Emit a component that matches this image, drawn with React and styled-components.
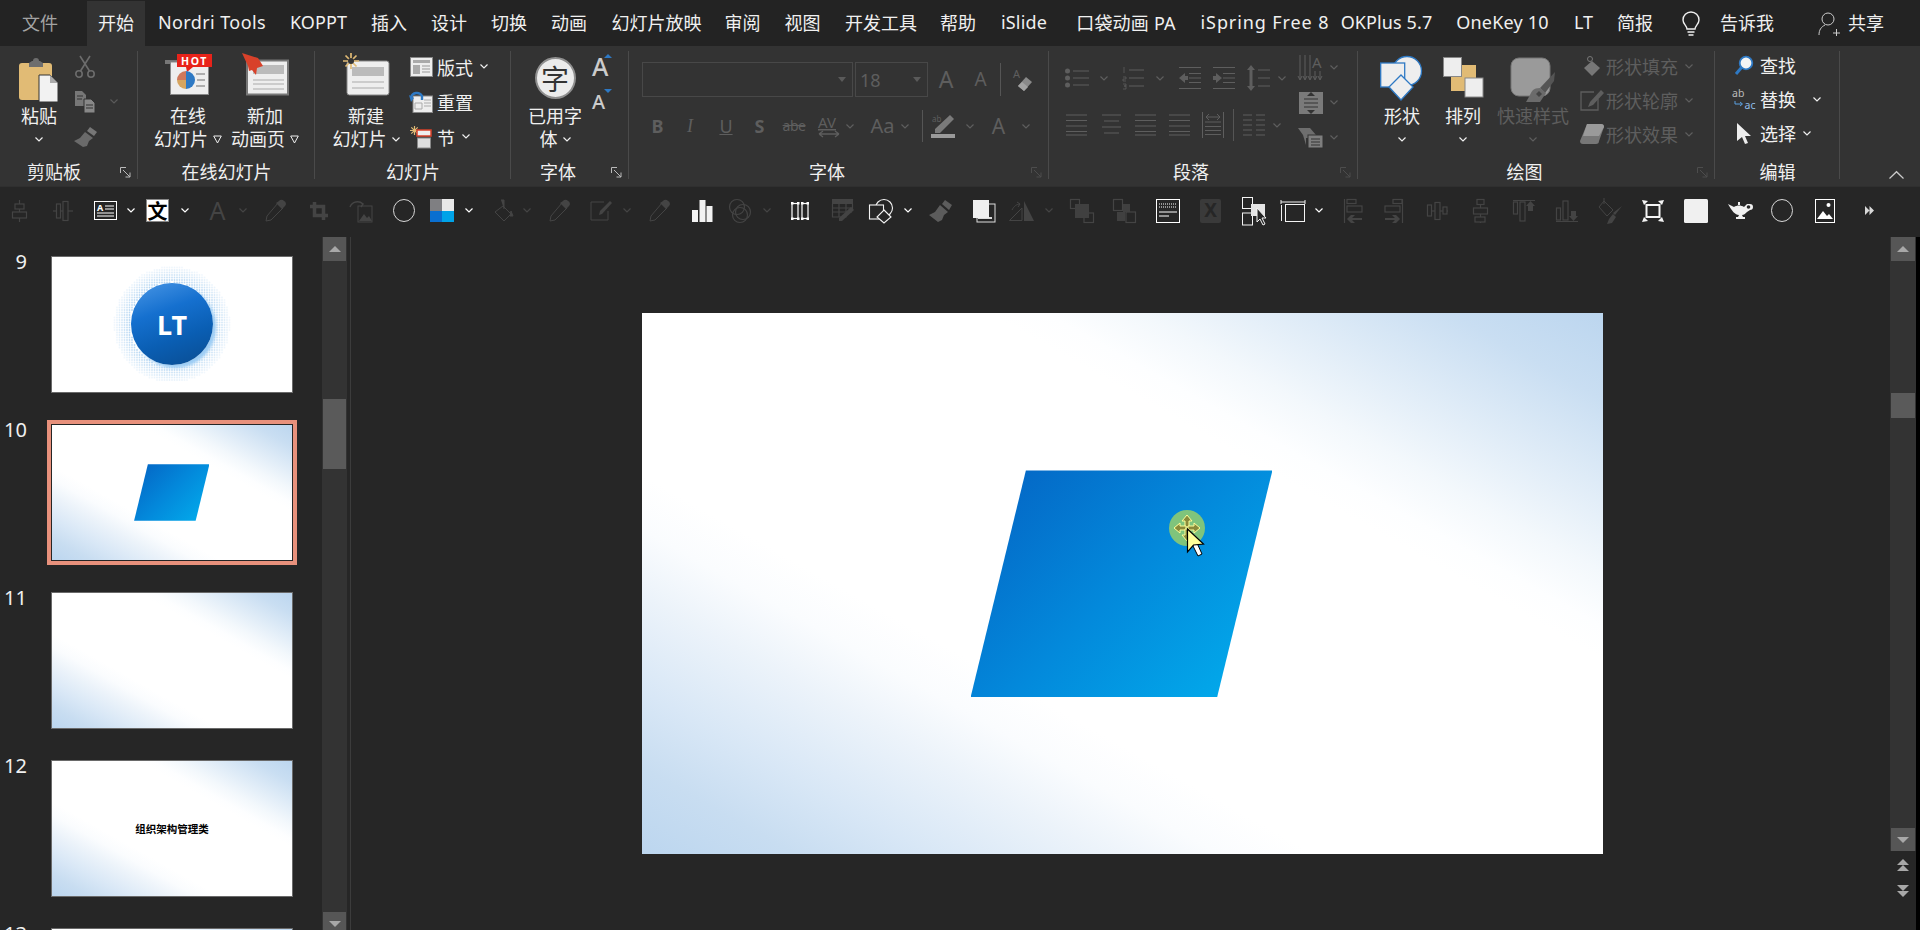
import React from "react";
import styled, { createGlobalStyle } from "styled-components";

const FONT = `"Noto Sans", "Noto Sans CJK SC", sans-serif`;
const W = "#f0f0f0";
const R = "#5e5e5e";
const Q = "#444444";
const GOLD = "#e1bb75";
const BLUE = "#2e79c4";

const Global = createGlobalStyle`
  html, body { margin: 0; height: 100%; overflow: hidden; background: #262626; }
  #root { height: 100%; }
  * { box-sizing: border-box; }
`;

const Page = styled.div`
  height: 100vh; display: flex; flex-direction: column; overflow: hidden;
  font-family: ${FONT}; color: ${W}; background: #262626;
`;

/* ---------- tab bar ---------- */
const TabBar = styled.div`
  height: 46px; flex: none; display: flex; align-items: stretch; padding: 1px 0 0 10px; background: #232323;
`;
const Tab = styled.div`
  width: ${p => p.$w}px; margin-left: ${p => p.$ml || 0}px; flex: none;
  display: flex; align-items: center; justify-content: center; padding-bottom: 3px;
  font-size: 18px; white-space: nowrap; letter-spacing: ${p => p.$ls || 0}px;
  color: ${p => (p.$muted ? "#a3a3a3" : W)};
  background: ${p => (p.$active ? "#333" : "transparent")};
`;

/* ---------- generic flow helpers ---------- */
const Cell = styled.div`
  flex: none; width: ${p => p.$w}px; margin-left: ${p => p.$ml}px;
  display: flex; align-items: center; justify-content: center;
`;
const Flow = ({ start = 0, items }) => {
  let pos = start;
  return items.map(([x, w, node], i) => {
    const ml = x - pos;
    pos = x + w;
    return <Cell key={i} $ml={ml} $w={w}>{node}</Cell>;
  });
};

/* ---------- ribbon ---------- */
const Ribbon = styled.div`
  height: 140px; flex: none; display: flex; align-items: flex-start; padding-top: 5px; background: #333;
`;
const Group = styled.section`
  position: relative; width: ${p => p.$w}px; height: 134px; flex: none; display: flex; flex-direction: column;
  &::after { content: ""; position: absolute; right: 0; top: 0; bottom: 6px; width: 1px; background: #4a4a4a; }
`;
const Body = styled.div`
  height: 109px; flex: none; display: flex; align-items: flex-start; padding-left: ${p => p.$pl || 0}px;
`;
const StackBody = styled.div`
  height: 109px; flex: none; display: flex; flex-direction: column;
`;
const GroupLabel = styled.div`
  height: 24px; line-height: 24px; font-size: 18px; text-align: center; color: ${W};
  padding-right: ${p => p.$pr || 0}px;
`;
const Launcher = styled.svg`
  position: absolute; right: 7px; bottom: 7px;
`;
const Big = styled.div`
  flex: none; width: ${p => p.$w}px; margin-left: ${p => p.$ml || 0}px;
  display: flex; flex-direction: column; align-items: center;
`;
const BigIcon = styled.div`
  height: 54px; padding-top: ${p => p.$t || 0}px; display: flex; align-items: flex-start; justify-content: center;
`;
const BigLine = styled.div`
  height: 23px; line-height: 23px; font-size: 18px; white-space: nowrap; display: flex; align-items: center; gap: 5px;
  color: ${p => (p.$off ? R : W)};
`;
const Col = styled.div`
  flex: none; width: ${p => p.$w}px; margin-left: ${p => p.$ml || 0}px; margin-top: ${p => p.$mt || 0}px;
  display: flex; flex-direction: column;
`;
const SmallRow = styled.div`
  height: ${p => p.$h || 35}px; display: flex; align-items: center;
`;
const SmallText = styled.span`
  font-size: 18px; white-space: nowrap; color: ${p => (p.$off ? R : W)}; margin-left: ${p => p.$ml || 0}px;
`;
const Chevron = styled.svg`
  flex: none; margin-left: ${p => p.$ml || 0}px; overflow: visible;
`;
const Chev = ({ c = W, ml }) => (
  <Chevron $ml={ml} width="8" height="5" viewBox="0 0 8 5">
    <path d="M.5.5 4 4 7.500.5" fill="none" stroke={c} strokeWidth="1.200" />
  </Chevron>
);
const Tri = () => (
  <svg width="9" height="9" viewBox="0 0 9 9"><path d="M.7 1h7.600L4.500 8z" fill="none" stroke={W} /></svg>
);

const Combo = styled.div`
  height: 35px; width: 100%; border: 1px solid #484848; display: flex; align-items: center; justify-content: space-between;
  padding: 0 6px 0 4px; color: ${R}; font-size: 18px;
`;
const ComboArrow = styled.span`
  width: 0; height: 0; border: 4px solid transparent; border-top: 5px solid #5a5a5a; border-bottom: 0;
`;
const VSep = styled.div`
  width: 1px; height: ${p => p.$h || 33}px; background: #555;
`;
const Row = styled.div`
  height: ${p => p.$h}px; flex: none; display: flex; align-items: center; margin-top: ${p => p.$mt || 0}px;
`;
const Glyph = styled.span`
  color: ${p => p.$c || R}; font-size: ${p => p.$s}px; font-weight: ${p => p.$b || 400}; font-style: ${p => p.$i || "normal"};
  line-height: 1; white-space: nowrap; text-decoration: ${p => p.$d || "none"}; font-family: ${p => p.$f || "inherit"};
  letter-spacing: ${p => p.$ls || 0}px;
`;
const CharDisc = styled.div`
  width: 41px; height: 42px; border-radius: 50%; background: #ececec; border: 2px solid #8f8f8f;
  display: flex; align-items: center; justify-content: center; color: #333; font-size: 28px; line-height: 1;
  font-family: "Noto Sans CJK SC", sans-serif;
`;
const SizeA = styled.div`
  position: relative; width: 20px; height: 27px; display: flex; align-items: center; color: #ccc;
  font-size: ${p => p.$s}px; font-weight: 500; line-height: 1;
`;
const SizeTick = styled.span`
  position: absolute; right: 0; top: ${p => p.$top}px; width: 0; height: 0; border: 4px solid transparent;
  ${p => (p.$up ? `border-bottom: 4px solid ${BLUE}; border-top: 0;` : `border-top: 4px solid ${BLUE}; border-bottom: 0;`)}
`;
const FootCaret = styled.div`
  flex: 1; height: 134px; display: flex; align-items: flex-end; justify-content: flex-end; padding: 0 16px 6px 0;
`;

/* ---------- quick toolbar ---------- */
const Toolbar = styled.div`
  height: 51px; flex: none; display: flex; align-items: center; padding-bottom: 3px;
  background: #262626; border-top: 1px solid #2f2f2f;
`;
const WhiteChip = styled.div`
  width: 23px; height: 23px; background: #fff; border: 1px solid #888; display: flex; align-items: center; justify-content: center;
  color: #000; font-size: 20px; font-weight: 700; line-height: 1; font-family: "Noto Sans CJK SC", sans-serif;
`;

/* ---------- workspace ---------- */
const Workspace = styled.div`
  flex: 1; min-height: 0; display: flex; background: #262626;
`;
const ThumbPane = styled.div`
  width: 322px; flex: none; overflow: hidden; padding-top: 19px; display: flex; flex-direction: column; gap: 31px;
`;
const ThumbRow = styled.div`
  height: 137px; flex: none; display: flex; align-items: flex-start; gap: 24px;
`;
const ThumbNo = styled.div`
  width: 27px; text-align: right; font-size: 20px; line-height: 20px; color: ${W}; flex: none; margin-top: -4px;
`;
const slideBg = `
  background-color: #fff;
  background-image:
    linear-gradient(to bottom left, #bcd6ef 0%, #c9def2 8%, #deebf7 16%, #f3f8fc 24%, #fdfeff 29%, rgba(255,255,255,0) 32%),
    linear-gradient(to top right, #bcd6ef 0%, #c8ddf1 8%, #d8e7f6 15%, #ecf3fa 24%, #fafcfe 30%, rgba(255,255,255,0) 35%);
`;
const Thumb = styled.div`
  position: relative; width: 242px; height: 137px; flex: none; overflow: hidden;
  border: 1px solid ${p => (p.$sel ? "#262626" : "#6a6a6a")};
  ${p => (p.$plain ? "background:#fff;" : slideBg)}
`;
const ThumbFrame = styled.div`
  flex: none; box-shadow: ${p => (p.$sel ? "0 0 0 4px #e8917c" : "none")};
`;
const Para = styled.div`
  position: absolute; left: 34.2%; top: 29.1%; width: 31.4%; height: 41.9%;
  clip-path: polygon(18.3% 0, 100% 0, 81.7% 100%, 0 100%);
  background: linear-gradient(135deg, #0468c6 8%, #0389db 50%, #02a6e9 88%);
`;
const LtDisc = styled.div`
  position: absolute; left: 79px; top: 26px; width: 82px; height: 82px; border-radius: 50%;
  background: linear-gradient(160deg, #4a97e6 0%, #1570cf 35%, #0a5eb3 65%, #0a4c90 100%);
  box-shadow: 3px 3px 3px #9ccdf5;
  display: flex; align-items: center; justify-content: center;
  color: #fff; font-weight: 700; font-size: 27px; line-height: 1;
`;
const Halo = styled.svg`
  position: absolute; left: 0; top: 0;
`;
const CenterText = styled.div`
  position: absolute; inset: 0; display: flex; align-items: center; justify-content: center;
  color: #000; font-size: 10.500px; font-weight: 700; white-space: nowrap; font-family: "Noto Sans CJK SC", sans-serif;
`;
const Scroll = styled.div`
  width: ${p => p.$w}px; flex: none; display: flex; flex-direction: column; background: #333; overflow: hidden;
  padding: 0 1px;
`;
const ScrollBtn = styled.div`
  height: ${p => p.$h}px; flex: none; background: #565656; display: flex; align-items: center; justify-content: center;
  margin-bottom: ${p => p.$mb || 0}px;
`;
const ScrollThumb = styled.div`
  height: ${p => p.$h}px; flex: none; margin-top: ${p => p.$mt}px; background: #5a5a5a;
`;
const Spacer = styled.div`flex: 1;`;
const Arrow = styled.span`
  width: 0; height: 0; border-left: 6px solid transparent; border-right: 6px solid transparent; display: block;
  ${p => (p.$up ? "border-bottom: 6px solid #a8a8a8;" : "border-top: 6px solid #a8a8a8;")}
`;
const DividerGap = styled.div`
  width: 4px; flex: none; border-right: 1px solid #3c3c3c;
`;
const SlideArea = styled.div`
  flex: 1; min-width: 0; display: flex; align-items: center; justify-content: center; padding-left: 4px;
`;
const Slide = styled.div`
  position: relative; width: 961px; height: 541px; flex: none; ${slideBg}
`;
const CursorLayer = styled.svg`
  position: absolute; left: 478px; top: 176px;
`;
const RightRail = styled.div`
  width: 26px; flex: none; display: flex; flex-direction: column;
`;
const RightScroll = styled(Scroll)`
  width: 26px; height: 614px;
`;
const PageJump = styled.div`
  flex: none; display: flex; flex-direction: column; align-items: center; gap: 14px; padding-top: 8px;
`;
const Stack = styled.div`
  display: flex; flex-direction: column; align-items: center; gap: 0;
`;
const EdgeStrip = styled.div`
  width: 4px; flex: none; background: #000;
`;

/* ---------- icons: ribbon ---------- */
const IconSvg = styled.svg`
  display: block; overflow: visible;
`;
const I = ({ w, h, children }) => <IconSvg width={w} height={h} viewBox={`0 0 ${w} ${h}`}>{children}</IconSvg>;

const PasteI = () => <I w={40} h={46}>
  <path d="M0 9a3 3 0 0 1 3-3h27a3 3 0 0 1 3 3v34H3a3 3 0 0 1-3-3z" fill={GOLD} />
  <path d="M10 6l3-2h1a3 3 0 0 1 6 0h1l3 2v4H10z" fill="#6e6e6e" />
  <path d="M20 18h11l8 8v19H20z" fill="#f2f2f2" stroke="#333" />
  <path d="M31 18l8 8h-8z" fill="#aaa" />
</I>;
const ScissorsI = () => <I w={20} h={22}>
  <g fill="none" stroke="#6c6c6c" strokeWidth="1.600"><circle cx="4" cy="18" r="3.200" /><circle cx="16" cy="18" r="3.200" /><path d="M5.500 15 15 0M14.500 15 5 0" /></g>
</I>;
const CopyI = () => <I w={21} h={22}>
  <path d="M0 0h7l4 4v11H0z" fill="#777" /><path d="M9 8h7l4 4v10H9z" fill="#888" stroke="#333" />
  <path d="M2 5h6M2 8h5M11 14h7M11 17h7" stroke="#333" />
</I>;
const BrushI = () => <I w={23} h={20}>
  <path d="M16 0l7 5-3 4-7-5z" fill="#777" /><path d="M11 5l8 6-4 3-2 5-4 1-9-6 6-3z" fill="#6a6a6a" />
</I>;
const OnlineI = () => <I w={47} h={42}>
  <rect x="0" y="7" width="14" height="4" fill="#777" />
  <rect x="5.500" y="9" width="38" height="32.500" fill="#eee" stroke="#888" />
  <path d="M12 1h35v13H28l-6 5-1-5h-9z" fill="#e8231a" />
  <text x="29.500" y="12" textAnchor="middle" fill="#fff" fontSize="10.500" fontWeight="700" letterSpacing="1.600" fontFamily={FONT}>HOT</text>
  <path d="M21 18a9 9 0 0 1 0 18z" fill={BLUE} /><path d="M21 27h-9a9 9 0 0 0 9 9z" fill="#d6a55f" /><path d="M21 18a9 9 0 0 0-9 9h9z" fill="#d0785b" />
  <path d="M31 21h9M32 27h8M31 33h9" stroke="#999" strokeWidth="1.500" />
</I>;
const AnimI = () => <I w={47} h={42}>
  <rect x="5" y="7.500" width="41" height="34" fill="#eee" stroke="#777" strokeWidth="2" />
  <rect x="11" y="12" width="31" height="9" fill="#bbb" />
  <path d="M11 27h31M11 31h31M11 36h31" stroke="#aaa" />
  <path d="M0 0l16 5 5 8-6 2-1 7-4-5-3 1-1-5z" fill="#d8412a" />
</I>;
const NewSlideI = () => <I w={46} h={42}>
  <rect x="4" y="8" width="42" height="34" rx="2.500" fill="#eee" stroke="#888" />
  <rect x="9" y="14" width="32" height="9" fill="#bbb" />
  <path d="M9 29h32M9 35h32" stroke="#aaa" />
  <path d="M8 0v16M0 8h16M2.500 2.500l11 11M13.500 2.500l-11 11" stroke={GOLD} strokeWidth="1.700" />
  <circle cx="8" cy="8" r="3" fill="#333" />
</I>;
const LayoutI = () => <I w={23} h={20}>
  <rect x=".5" y=".5" width="22" height="19" fill="#eee" stroke="#888" /><rect x="3" y="3" width="17" height="3" fill="#aaa" />
  <rect x="3" y="8" width="7" height="9" fill="#aaa" /><path d="M12 9h8M12 12h8M12 15h8" stroke="#999" />
</I>;
const ResetI = () => <I w={24} h={22}>
  <rect x="4" y="5" width="19.500" height="16.500" fill="#eee" stroke="#888" /><path d="M15 9h7M15 12h7M15 15h7M6 12h7v6H6z" stroke="#aaa" fill="none" />
  <path d="M2 6.500a6 6 0 0 1 11-1.500v4" fill="none" stroke={BLUE} strokeWidth="2.400" /><path d="M0 4l5 3-3 4z" fill={BLUE} />
</I>;
const SectionI = () => <I w={22} h={22}>
  <path d="M4.500 0v9M0 4.500h9M1.300 1.300l6.400 6.400M7.700 1.300 1.300 7.700" stroke={GOLD} strokeWidth="1.200" />
  <rect x="7" y="4" width="14" height="6" fill="#eee" stroke="#d8412a" strokeWidth="1.500" /><rect x="7.500" y="12" width="13" height="10" fill="#ddd" stroke="#888" />
</I>;
const EraserI = () => <I w={20} h={22}>
  <text x="0" y="9" fontSize="11" fill={R} fontFamily={FONT}>A</text>
  <path d="M13 8l6 5-8 9-6-5z" fill="#8a8a8a" /><path d="M5 17l4-4 6 5-4 4z" fill="#a3a3a3" />
</I>;
const AVI = () => <I w={22} h={23}>
  <text x="0" y="13" fontSize="15" fill={R} fontFamily={FONT} textDecoration="underline">AV</text>
  <path d="M1 19h20M1 19l4-3M1 19l4 3M21 19l-4-3M21 19l-4 3" stroke={R} strokeWidth="1.300" fill="none" />
</I>;
const HiliteI = () => <I w={24} h={23}>
  <text x="1" y="7" fontSize="8" fill={R} fontFamily={FONT}>ab</text>
  <path d="M19 0l4 4-14 14H4v-4z" fill="#7a7a7a" />
  <rect x="0" y="19" width="24" height="4" fill="#9a9a9a" />
</I>;
const BulletsI = () => <I w={24} h={20}>
  <g fill={R}><circle cx="2.500" cy="3" r="2.500" /><circle cx="2.500" cy="10" r="2.500" /><circle cx="2.500" cy="17" r="2.500" /></g>
  <path d="M8 3h16M8 10h16M8 17h16" stroke={R} />
</I>;
const NumsI = () => <I w={22} h={24}>
  <path d="M2 1v6M1 11h3v2H1v2h3M1 18h3v2H2h2v3H1" fill="none" stroke={R} strokeWidth=".8" />
  <path d="M7 4h15M7 12h15M7 20h15" stroke={R} />
</I>;
const IndentI = ({ flip }) => <I w={22} h={22}>
  <path d="M0 .5h22M10 6.500h12M10 11h12M10 15.500h12M0 21.500h22" stroke={R} />
  {flip ? <path d="M0 11l6-5v3h3v4H6v3z" fill={R} transform="translate(9 0) scale(-1 1)" /> : <path d="M0 11l6-5v3h3v4H6v3z" fill={R} />}
</I>;
const SpacingI = () => <I w={23} h={26}>
  <path d="M4 0l4 5H5.500v16H8l-4 5-4-5h2.500V5H0z" fill={R} /><path d="M11 5h12M11 13h12M11 21h12" stroke={R} />
</I>;
const AlignI = ({ m = "j" }) => <I w={21} h={22}>
  <path d={m === "c" ? "M1 1h19M3 7h15M1 13h19M3 19h15" : "M0 1h21M0 6.500h21M0 12h21M0 17.500h21M0 21h21"} stroke={R} />
</I>;
const DistributeI = () => <I w={22} h={26}>
  <path d="M.5 0v26M21.500 0v26M3 10h16M3 14.500h16M3 18.500h16M3 22.500h16" stroke={R} fill="none" />
  <path d="M4 5h14M4 5l3-3M4 5l3 3M18 5l-3-3M18 5l-3 3" stroke={R} fill="none" />
</I>;
const ColsI = () => <I w={22} h={22}>
  <path d="M0 1h9M0 6h9M0 11h9M0 16h9M0 21h9M13 1h9M13 6h9M13 11h9M13 16h9M13 21h9" stroke={R} />
</I>;
const VTextI = () => <I w={25} h={26}>
  <path d="M2 0v24M7 0v24M12 0v24M0 21l2 4 2-4M5 21l2 4 2-4M10 21l2 4 2-4" stroke={R} fill="none" />
  <text x="14" y="13" fontSize="15" fill={R} fontFamily={FONT}>A</text>
  <path d="M17 16v8M22 16v8M15 21l2 4 2-4M20 21l2 4 2-4" stroke={R} fill="none" />
</I>;
const TextAlignI = () => <I w={24} h={22}>
  <rect width="24" height="22" fill="#7a7a7a" /><path d="M5 7h14M5 11h14M5 15h14" stroke="#333" />
  <path d="M12 0l4 4h-8zM12 22l4-4H8z" fill="#333" />
</I>;
const SmartI = () => <I w={25} h={20}>
  <path d="M0 0h12l6 7-2 3H8v7L5 7z" fill="#6e6e6e" /><rect x="10" y="7" width="15" height="13" fill="#7e7e7e" stroke="#333" /><path d="M13 11h9M13 14h9M13 17h9" stroke="#333" />
</I>;
const ShapesI = () => <I w={44} h={44}>
  <circle cx="27" cy="15" r="14.500" fill="#eee" stroke={BLUE} strokeWidth="1.300" />
  <rect x=".7" y="7" width="24" height="24" fill="#eee" stroke={BLUE} strokeWidth="1.300" />
  <path d="M21 19l12 12-12 13L9 31z" fill="#eee" stroke={BLUE} strokeWidth="1.300" />
</I>;
const ArrangeI = () => <I w={41} h={41}>
  <rect x="19" y="8" width="14" height="15" fill={GOLD} /><rect x="8" y="20" width="15" height="14" fill={GOLD} />
  <rect x=".5" y=".5" width="18" height="19" fill="#eee" stroke="#888" /><rect x="22" y="21" width="18" height="19" fill="#eee" stroke="#888" />
</I>;
const QuickI = () => <I w={45} h={44}>
  <rect x="0" y="0" width="39" height="38" rx="8" fill="#9a9a9a" stroke="#777" />
  <path d="M44 14 29 30l5 5 9-12z" fill="#555" /><path d="M29 30c-7 0-8 3-10 7l-4 7h14l6-9z" fill="#6b6b6b" />
  <path d="M25 36l3 3 3-3-3-3z" fill="#444" />
</I>;
const FillI = () => <I w={20} h={20}>
  <path d="M10 5l8 7-8 8-8-8z" fill="#777" /><circle cx="8" cy="3" r="2.500" fill="none" stroke="#777" />
</I>;
const OutlineI = () => <I w={24} h={21}>
  <path d="M14 2H1v18h17V9" fill="none" stroke={R} strokeWidth="1.300" /><path d="M21 0l3 3-11 12-5 2 2-5z" fill={R} />
</I>;
const EffectI = () => <I w={24} h={20}>
  <path d="M7 0h14a3 3 0 0 1 3 3l-5 14a3 3 0 0 1-3 3H3a3 3 0 0 1-3-3z" fill="#777" /><path d="M7 0h14a3 3 0 0 1 3 3l-5 9H3z" fill="#9a9a9a" />
</I>;
const FindI = () => <I w={18} h={19}>
  <circle cx="11" cy="7" r="6.300" fill="#f4f4f4" stroke={BLUE} strokeWidth="1.800" /><path d="M6.500 11.500 1 18" stroke={BLUE} strokeWidth="3" />
</I>;
const ReplaceI = () => <I w={24} h={22}>
  <text x="0" y="9" fontSize="10.500" fill="#bbb" fontFamily={FONT}>ab</text>
  <text x="12.500" y="21" fontSize="10.500" fill="#8fbde8" fontFamily={FONT}>ac</text>
  <path d="M3 13v3h7M8 14l2.500 2L8 18" stroke="#5aa0e0" fill="none" />
</I>;
const SelectI = () => <I w={16} h={21}>
  <path d="M1 0v18l5-4 3 7 3-1-3-7h6z" fill="#eee" />
</I>;
const LauncherI = ({ c }) => (
  <Launcher width="11" height="11" viewBox="0 0 11 11">
    <path d="M.5 6V.5H6M3 3l7 7M10 5.500V10H5.500" fill="none" stroke={c} />
  </Launcher>
);

/* ---------- icons: quick toolbar ---------- */
const qs = { fill: "none", stroke: Q, strokeWidth: 1.200 };
const Q1 = () => <I w={15} h={22}><g {...qs}><path d="M7.500 0v22" /><rect x="3" y="4" width="9" height="5" fill="#262626" /><rect x=".5" y="12" width="14" height="6" fill="#262626" /></g></I>;
const Q2 = () => <I w={20} h={20}><g {...qs}><path d="M0 10h20" /><rect x="3.500" y="3" width="4" height="14" fill="#262626" /><rect x="10" y=".5" width="5" height="19" fill="#262626" /></g></I>;
const Q3 = () => <I w={23} h={19}><rect x=".5" y=".5" width="22" height="18" fill="#262626" stroke="#fff" /><text x="3" y="10" fontSize="9" fontWeight="700" fill="#fff" fontFamily={FONT}>A</text><path d="M11 5h9M11 8h9M3 12h17M3 15h17" stroke="#fff" /></I>;
const Dropper = ({ c = Q }) => <I w={22} h={22}>
  <path d="M14 3l5 5-12 12-5 1 1-5z" fill="none" stroke={c} /><path d="M15 1a3 3 0 0 1 5 0 3 3 0 0 1 1 5l-3 3-6-6z" fill={c} />
</I>;
const Crop = () => <I w={20} h={20}><path d="M5.500 1v13.500H19M14.500 19V5.500H1" fill="none" stroke={Q} strokeWidth="3.500" /></I>;
const ChangePic = () => <I w={24} h={24}>
  <path d="M1 8a8 8 0 0 1 13-3M11 3l3 2-2 3" fill="none" stroke={Q} strokeWidth="1.500" /><rect x="9" y="7" width="14" height="16" fill="none" stroke={Q} /><path d="M10 22l5-7 3 4 2-2 3 5z" fill={Q} />
</I>;
const Oval = () => <I w={22} h={23}><ellipse cx="11" cy="11.500" rx="10.500" ry="11" fill="none" stroke="#d8d8d8" /></I>;
const Swatch = () => <I w={24} h={23}><rect width="12" height="12" fill="#7f7f82" /><rect x="12" width="12" height="12" fill="#e8e8e8" /><rect y="12" width="12" height="11" fill="#0a6fd0" /><rect x="12" y="12" width="12" height="11" fill="#00a3e8" /></I>;
const Bucket = ({ c = Q }) => <I w={20} h={22}><path d="M10 6l8 8-7 7-9-9z" fill="none" stroke={c} /><path d="M8 0h3v9M18 11l2 5h-3z" fill={c} stroke={c} /></I>;
const PenBox = () => <I w={22} h={20}><path d="M14 1H1v18h17v-9" fill="none" stroke={Q} /><path d="M20 0l2 2-10 11-3 1 1-4z" fill={Q} /></I>;
const Bars = () => <I w={20} h={22}><rect y="10" width="6" height="12" fill="#f2f2f2" /><rect x="7.500" y="0" width="6" height="22" fill="#f2f2f2" /><rect x="14.500" y="6" width="6" height="16" fill="#f2f2f2" /></I>;
const Venn = () => <I w={22} h={24}><g {...qs}><circle cx="8" cy="8" r="7.500" /><circle cx="14" cy="13" r="7.500" /><circle cx="11" cy="16" r="7.500" /></g></I>;
const Frames = () => <I w={18} h={18}><g fill="none" stroke="#fff" strokeWidth="1.200"><rect x="1" y="1.500" width="6" height="15" /><rect x="11" y="1.500" width="6" height="15" /></g><g fill="#fff"><rect width="2.500" height="2.500" /><rect x="6" width="2.500" height="2.500" /><rect x="10" width="2.500" height="2.500" /><rect x="15.500" width="2.500" height="2.500" /><rect y="15.500" width="2.500" height="2.500" /><rect x="6" y="15.500" width="2.500" height="2.500" /><rect x="10" y="15.500" width="2.500" height="2.500" /><rect x="15.500" y="15.500" width="2.500" height="2.500" /></g></I>;
const TableEdit = () => <I w={22} h={23}><path d="M0 0h21v5H0z" fill={Q} /><path d="M.5 5v13h14M0 9h20M0 13h20M7 5v13M14 5v8M20.500 5v6" {...qs} /><path d="M19 8l3 3-12 11H7v-3z" fill={Q} /></I>;
const ShapesOut = () => <I w={24} h={24}><g fill="none" stroke="#f4f4f4" strokeWidth="1.100"><circle cx="15" cy="9" r="8.500" /><rect x=".5" y="6" width="14" height="14" fill="#262626" /><path d="M15 11l7 7-7 6-7-6z" fill="#262626" /></g></I>;
const BrushQ = ({ c = "#5c5c5c" }) => <I w={23} h={22}><path d="M16 0l7 5-3 5-7-6z" fill={c} /><path d="M11 5l8 7-4 3-2 5-4 2-9-7 6-3z" fill={c} /></I>;
const DoubleSq = () => <I w={22} h={22}><rect x="4" y="4" width="18" height="18" fill="#262626" stroke="#ddd" /><rect x="5" y="17" width="14" height="2" fill="#ddd" /><rect width="16" height="18" fill="#f0f0f0" /></I>;
const Triangles = () => <I w={25} h={20}><path d="M15 0v20h10z" fill={Q} /><path d="M.5 19.500 13 7v12.500zM3 9c2-4 5-6 8-6M8 1l3 2-2 3" stroke={Q} fill="none" /></I>;
const Over1 = () => <I w={24} h={24}><rect x=".5" y=".5" width="9" height="9" {...qs} /><rect x="14" y="14" width="9.500" height="9.500" {...qs} /><rect x="5" y="5" width="14" height="14" fill="#404040" /></I>;
const Over2 = () => <I w={23} h={24}><rect x=".5" y=".5" width="9" height="11" {...qs} /><rect x="13" y="13" width="9.500" height="10.500" {...qs} /><rect x="10" y="5" width="7" height="8" fill="#404040" /><rect x="4" y="13" width="8" height="9" fill="#404040" /></I>;
const TextFrame = () => <I w={24} h={24}><rect x=".5" y=".5" width="23" height="23" fill="#262626" stroke="#fff" /><path d="M3 5h18M3 8h18" stroke="#fff" strokeDasharray="1 1" /><path d="M3 13h18M3 17h10" stroke="#fff" /></I>;
const XBox = styled.div`
  width: 21px; height: 24px; background: #3a3a3a; border-radius: 2px; display: flex; align-items: center; justify-content: center;
  color: #262626; font-weight: 700; font-size: 19px; line-height: 1;
`;
const CurSq = () => <I w={24} h={28}><g fill="none" stroke="#f4f4f4"><rect x=".5" y=".5" width="10" height="11" /><rect x=".5" y="16" width="10" height="12" /></g><rect x="9" y="7" width="14" height="12" fill="#e5e5e5" /><path d="M15 11v14l3-3 3 6 2-1-3-6h4z" fill="#262626" stroke="#f4f4f4" /></I>;
const FrameQ = () => <I w={24} h={22}><path d="M0 2h24M0 0v4M24 0v4" stroke="#eee" /><rect x="4.500" y="4.500" width="19" height="17" fill="none" stroke="#f4f4f4" /><path d="M.5 5v16" stroke="#eee" /></I>;
const AL = ({ flip }) => <I w={18} h={24}><g {...qs}>{flip ? <path d="M17.500 0v24" /> : <path d="M.5 0v24" />}<rect x={flip ? 8 : 3} y=".5" width="9" height="4" /><rect x={flip ? 0 : 3} y="7" width="15" height="6" /></g><path d={flip ? "M0 19h10l-3-3h4l4 4-4 4H7l3-3H0z" : "M18 19H8l3-3H7l-4 4 4 4h4l-3-3h10z"} fill={Q} /></I>;
const Q31 = () => <I w={21} h={18}><g {...qs}><path d="M0 9h21" /><rect x=".5" y="3" width="4" height="11" fill="#262626" /><rect x="8" y=".5" width="5" height="17" fill="#262626" /><rect x="16" y="5" width="4" height="7" fill="#262626" /></g></I>;
const Q32 = () => <I w={15} h={24}><g {...qs}><path d="M7.500 0v24" /><rect x="4" y=".5" width="7" height="5" fill="#262626" /><rect x=".5" y="9" width="14" height="6" fill="#262626" /><rect x="2" y="18" width="10" height="5" fill="#262626" /></g></I>;
const UpAlign = ({ down }) => <I w={22} h={22}><path d={down ? "M0 21.500h22" : "M0 .5h22"} stroke={Q} /><rect x=".5" y={down ? 8 : 2} width="4" height={12} {...qs} /><rect x="7" y={down ? 1 : 2} width="5" height="19" {...qs} /><path d={down ? "M15 11h5v5h2l-4.500 5L13 16h2z" : "M15 11h5V6h2L17.500 1 13 6h2z"} fill={Q} /></I>;
const BucketBrush = () => <I w={24} h={26}><path d="M6 3l9 9-6 6-8-9z" fill="none" stroke={Q} /><path d="M6 0v6" stroke={Q} /><path d="M24 8l-7 9-2-2zM15 16l3 3-4 6-5 1 2-5z" fill={Q} /></I>;
const FitFrame = () => <I w={22} h={24}><rect x="4.500" y="6" width="13" height="12" fill="none" stroke="#f4f4f4" strokeWidth="2" /><path d="M0 1l6 1-4 4zM22 1l-6 1 4 4zM0 23l6-1-4-4zM22 23l-6-1 4-4z" fill="#f4f4f4" /></I>;
const WhiteRect = () => <I w={24} h={24}><rect width="24" height="24" rx="1.500" fill="#f0f0f0" /></I>;
const Lamp = () => <I w={23} h={17}><path d="M0 2l6 3c3-2 7-2 10 0l3-3h3a3 3 0 0 1 0 6l-3 2c-2 2-3 3-5 3l1 2h2v2H8v-2h2l1-2c-4 0-7-4-11-11z" fill="#f0f0f0" /><circle cx="20.500" cy="5" r="1.800" fill="#262626" /><path d="M11 0v3" stroke="#f0f0f0" strokeWidth="2" /></I>;
const PicQ = () => <I w={20} h={24}><rect x=".5" y=".5" width="19" height="23" fill="#262626" stroke="#fff" /><path d="M2 20l6-8 4 5 2-2 4 5z" fill="#fff" /><circle cx="13.500" cy="6" r="2" fill="#fff" /></I>;
const More = () => <I w={9} h={9}><path d="M0 0l4.500 4.500L0 9zM4.500 0 9 4.500 4.500 9z" fill="#d8d8d8" /></I>;
const ChevQ = ({ on }) => <Chev c={on ? "#fff" : Q} />;
const GlyphA = () => <Glyph $s={25} $c={Q}>A</Glyph>;

const qat = [
  [12, 15, <Q1 />], [53, 20, <Q2 />], [94, 23, <Q3 />], [127, 8, <ChevQ on />], [146, 23, <WhiteChip>文</WhiteChip>], [181, 8, <ChevQ on />],
  [209, 17, <GlyphA />], [239, 8, <ChevQ />], [264, 22, <Dropper />], [309, 20, <Crop />], [349, 24, <ChangePic />],
  [393, 22, <Oval />], [430, 24, <Swatch />], [465, 8, <ChevQ on />], [493, 20, <Bucket />], [523, 8, <ChevQ />],
  [548, 22, <Dropper />], [590, 22, <PenBox />], [623, 8, <ChevQ />], [648, 22, <Dropper />], [692, 20, <Bars />],
  [729, 22, <Venn />], [763, 8, <ChevQ />], [791, 18, <Frames />], [832, 22, <TableEdit />], [869, 24, <ShapesOut />],
  [904, 8, <ChevQ on />], [929, 23, <BrushQ />], [973, 22, <DoubleSq />], [1009, 25, <Triangles />], [1045, 8, <ChevQ />],
  [1070, 24, <Over1 />], [1113, 23, <Over2 />], [1156, 24, <TextFrame />], [1200, 21, <XBox>X</XBox>], [1242, 24, <CurSq />],
  [1281, 24, <FrameQ />], [1315, 8, <ChevQ on />], [1344, 18, <AL />], [1385, 18, <AL flip />], [1427, 21, <Q31 />],
  [1473, 15, <Q32 />], [1513, 22, <UpAlign />], [1556, 22, <UpAlign down />], [1598, 24, <BucketBrush />], [1642, 22, <FitFrame />],
  [1684, 24, <WhiteRect />], [1728, 23, <Lamp />], [1771, 22, <Oval />], [1815, 20, <PicQ />], [1865, 9, <More />],
];

const fontRow1 = [
  [642, 211, <Combo><span /><ComboArrow /></Combo>], [855, 73, <Combo><span>18</span><ComboArrow /></Combo>],
  [936, 20, <Glyph $s={23}>A</Glyph>], [971, 19, <Glyph $s={19}>A</Glyph>], [1000, 1, <VSep />], [1013, 20, <EraserI />],
];
const ChevR = () => <Chev c={R} />;
const fontRow2 = [
  [651, 13, <Glyph $s={18} $b={700}>B</Glyph>], [685, 10, <Glyph $s={18} $i="italic" $f={`"Liberation Serif", serif`}>I</Glyph>],
  [720, 12, <Glyph $s={18} $d="underline">U</Glyph>], [753, 13, <Glyph $s={18} $b={700}>S</Glyph>],
  [782, 24, <Glyph $s={14} $d="line-through" $ls={-.5}>abe</Glyph>], [818, 22, <AVI />], [846, 8, <ChevR />],
  [870, 25, <Glyph $s={20}>Aa</Glyph>], [901, 8, <ChevR />], [922, 1, <VSep $h={32} />], [931, 24, <HiliteI />],
  [966, 8, <ChevR />], [991, 15, <Glyph $s={21}>A</Glyph>], [1022, 8, <ChevR />],
];
const paraRow1 = [
  [1065, 24, <BulletsI />], [1100, 8, <ChevR />], [1122, 22, <NumsI />], [1156, 8, <ChevR />], [1179, 22, <IndentI />],
  [1213, 22, <IndentI flip />], [1247, 23, <SpacingI />], [1278, 8, <ChevR />],
];
const paraRow2 = [
  [1066, 21, <AlignI />], [1101, 21, <AlignI m="c" />], [1135, 20, <AlignI />], [1169, 20, <AlignI />], [1202, 22, <DistributeI />],
  [1233, 1, <VSep $h={32} />], [1243, 22, <ColsI />], [1273, 8, <ChevR />],
];

const tabs = [
  ["开始", 58, .0, true], ["Nordri Tools", 134, .4], ["KOPPT", 79, .1], ["插入", 62], ["设计", 58], ["切换", 62], ["动画", 58], ["幻灯片放映", 117],
  ["审阅", 55], ["视图", 65], ["开发工具", 92], ["帮助", 62], ["iSlide", 70, .2], ["口袋动画 PA", 134, .2], ["iSpring Free 8", 144, .9],
  ["OKPlus 5.7", 99, .1], ["OneKey 10", 133, .2], ["LT", 29], ["简报", 74],
];

const dots = [];
for (let gx = 60; gx <= 180; gx += 2.500) {
  for (let gy = 8; gy <= 128; gy += 2.500) {
    const r = Math.hypot(gx - 120, gy - 67.500);
    if (r > 42 && r < 58) dots.push([gx, gy, ((58 - r) / 16) * .55 + .12]);
  }
}

export default function App() {
  return (
    <Page>
      <Global />
      <TabBar>
        <Tab $w={60} $muted>文件</Tab>
        {tabs.map(([t, w, ls, a], i) => <Tab key={t} $w={w} $ls={ls} $active={a} $ml={i === 0 ? 17 : 0}>{t}</Tab>)}
        <Flow start={1672} items={[
          [1682, 18, <I w={18} h={24}><path d="M5 17c0-3-4-5-4-9a8 8 0 0 1 16 0c0 4-4 6-4 9z" fill="none" stroke={W} strokeWidth="1.400" /><path d="M5.500 20h7M6.500 23h5" stroke={W} strokeWidth="1.600" /></I>],
          [1720, 54, <Tab $w={54}>告诉我</Tab>],
          [1818, 22, <I w={22} h={24}><circle cx="10" cy="7" r="6" fill="none" stroke="#ccc" /><path d="M1 23c0-5 2-8 6-10M15 21h7M18.500 17v7" fill="none" stroke="#ccc" /></I>],
          [1848, 36, <Tab $w={36}>共享</Tab>],
        ]} />
      </TabBar>

      <Ribbon>
        <Group $w={138}>
          <Body $pl={13}>
            <Big $w={52}>
              <BigIcon $t={6}><PasteI /></BigIcon>
              <BigLine>粘贴</BigLine>
              <BigLine><Chev /></BigLine>
            </Big>
            <Col $ml={9} $w={50} $mt={-2}>
              <SmallRow><Cell $ml={1} $w={20}><ScissorsI /></Cell></SmallRow>
              <SmallRow><Cell $ml={1} $w={21}><CopyI /></Cell><Chev c="#5a5a5a" ml={14} /></SmallRow>
              <SmallRow><Cell $ml={0} $w={23}><BrushI /></Cell></SmallRow>
            </Col>
          </Body>
          <GroupLabel $pr={30}>剪贴板</GroupLabel>
          <LauncherI c="#bbb" />
        </Group>

        <Group $w={177}>
          <Body>
            <Big $w={74} $ml={13}>
              <BigIcon $t={2}><OnlineI /></BigIcon>
              <BigLine>在线</BigLine>
              <BigLine>幻灯片<Tri /></BigLine>
            </Big>
            <Big $w={74} $ml={3}>
              <BigIcon $t={2}><AnimI /></BigIcon>
              <BigLine>新加</BigLine>
              <BigLine>动画页<Tri /></BigLine>
            </Big>
          </Body>
          <GroupLabel>在线幻灯片</GroupLabel>
        </Group>

        <Group $w={196}>
          <Body>
            <Big $w={74} $ml={14}>
              <BigIcon $t={2}><NewSlideI /></BigIcon>
              <BigLine>新建</BigLine>
              <BigLine>幻灯片<Chev /></BigLine>
            </Big>
            <Col $ml={6} $w={90} $mt={-2}>
              <SmallRow><Cell $ml={0} $w={24}><LayoutI /></Cell><SmallText $ml={4}>版式</SmallText><Chev ml={7} /></SmallRow>
              <SmallRow><Cell $ml={0} $w={24}><ResetI /></Cell><SmallText $ml={4}>重置</SmallText></SmallRow>
              <SmallRow><Cell $ml={0} $w={24}><SectionI /></Cell><SmallText $ml={4}>节</SmallText><Chev ml={7} /></SmallRow>
            </Col>
          </Body>
          <GroupLabel>幻灯片</GroupLabel>
        </Group>

        <Group $w={118}>
          <Body>
            <Big $w={60} $ml={14}>
              <BigIcon $t={6}><CharDisc>字</CharDisc></BigIcon>
              <BigLine>已用字</BigLine>
              <BigLine>体<Chev /></BigLine>
            </Big>
            <Col $ml={7} $w={24}>
              <SmallRow $h={30}><SizeA $s={25}>A<SizeTick $up $top={1} /></SizeA></SmallRow>
              <SmallRow $h={42}><SizeA $s={20}>A<SizeTick $top={0} /></SizeA></SmallRow>
            </Col>
          </Body>
          <GroupLabel $pr={24}>字体</GroupLabel>
          <LauncherI c="#bbb" />
        </Group>

        <Group $w={420}>
          <StackBody>
            <Row $h={35} $mt={11}><Flow start={629} items={fontRow1} /></Row>
            <Row $h={36} $mt={11}><Flow start={629} items={fontRow2} /></Row>
          </StackBody>
          <GroupLabel $pr={24}>字体</GroupLabel>
          <LauncherI c="#4d4d4d" />
        </Group>

        <Group $w={309}>
          <Body>
            <Col $w={238}>
              <Row $h={34} $mt={10}><Flow start={1049} items={paraRow1} /></Row>
              <Row $h={34} $mt={13}><Flow start={1049} items={paraRow2} /></Row>
            </Col>
            <Col $w={50} $ml={11} $mt={-1}>
              <SmallRow><Cell $ml={0} $w={25}><VTextI /></Cell><Chev c={R} ml={7} /></SmallRow>
              <SmallRow><Cell $ml={0} $w={25}><TextAlignI /></Cell><Chev c={R} ml={7} /></SmallRow>
              <SmallRow><Cell $ml={0} $w={25}><SmartI /></Cell><Chev c={R} ml={7} /></SmallRow>
            </Col>
          </Body>
          <GroupLabel $pr={25}>段落</GroupLabel>
          <LauncherI c="#4d4d4d" />
        </Group>

        <Group $w={357}>
          <Body>
            <Big $w={52} $ml={18}>
              <BigIcon $t={5}><ShapesI /></BigIcon>
              <BigLine>形状</BigLine>
              <BigLine><Chev /></BigLine>
            </Big>
            <Big $w={52} $ml={9}>
              <BigIcon $t={6}><ArrangeI /></BigIcon>
              <BigLine>排列</BigLine>
              <BigLine><Chev /></BigLine>
            </Big>
            <Big $w={74} $ml={7}>
              <BigIcon $t={7}><QuickI /></BigIcon>
              <BigLine $off>快速样式</BigLine>
              <BigLine><Chev c={R} /></BigLine>
            </Big>
            <Col $ml={10} $w={124} $mt={-2}>
              <SmallRow $h={34}><Cell $ml={0} $w={24}><FillI /></Cell><SmallText $off $ml={2}>形状填充</SmallText><Chev c={R} ml={7} /></SmallRow>
              <SmallRow $h={34}><Cell $ml={0} $w={24}><OutlineI /></Cell><SmallText $off $ml={2}>形状轮廓</SmallText><Chev c={R} ml={7} /></SmallRow>
              <SmallRow $h={34}><Cell $ml={0} $w={24}><EffectI /></Cell><SmallText $off $ml={2}>形状效果</SmallText><Chev c={R} ml={7} /></SmallRow>
            </Col>
          </Body>
          <GroupLabel $pr={24}>绘图</GroupLabel>
          <LauncherI c="#4d4d4d" />
        </Group>

        <Group $w={125}>
          <Body>
            <Col $ml={16} $w={100} $mt={-3}>
              <SmallRow $h={34}><Cell $ml={0} $w={25}><FindI /></Cell><SmallText $ml={4}>查找</SmallText></SmallRow>
              <SmallRow $h={34}><Cell $ml={0} $w={25}><ReplaceI /></Cell><SmallText $ml={4}>替换</SmallText><Chev ml={17} /></SmallRow>
              <SmallRow $h={34}><Cell $ml={0} $w={25}><SelectI /></Cell><SmallText $ml={4}>选择</SmallText><Chev ml={7} /></SmallRow>
            </Col>
          </Body>
          <GroupLabel>编辑</GroupLabel>
        </Group>

        <FootCaret>
          <I w={15} h={8}><path d="M.5 7.500 7.500.7l7 6.800" fill="none" stroke="#ccc" strokeWidth="1.200" /></I>
        </FootCaret>
      </Ribbon>

      <Toolbar><Flow items={qat} /></Toolbar>

      <Workspace>
        <ThumbPane>
          <ThumbRow>
            <ThumbNo>9</ThumbNo>
            <Thumb $plain>
              <Halo width="240" height="135" viewBox="0 0 240 135">
                {dots.map(([x, y, o], i) => <circle key={i} cx={x} cy={y} r=".9" fill="#8fc1ec" opacity={o} />)}
              </Halo>
              <LtDisc>LT</LtDisc>
            </Thumb>
          </ThumbRow>
          <ThumbRow>
            <ThumbNo>10</ThumbNo>
            <ThumbFrame $sel><Thumb $sel><Para /></Thumb></ThumbFrame>
          </ThumbRow>
          <ThumbRow>
            <ThumbNo>11</ThumbNo>
            <Thumb />
          </ThumbRow>
          <ThumbRow>
            <ThumbNo>12</ThumbNo>
            <Thumb><CenterText>组织架构管理类</CenterText></Thumb>
          </ThumbRow>
          <ThumbRow>
            <ThumbNo>13</ThumbNo>
            <Thumb />
          </ThumbRow>
        </ThumbPane>

        <Scroll $w={25}>
          <ScrollBtn $h={24}><Arrow $up /></ScrollBtn>
          <ScrollThumb $h={70} $mt={138} />
          <Spacer />
          <ScrollBtn $h={24} $mb={-6}><Arrow /></ScrollBtn>
        </Scroll>
        <DividerGap />

        <SlideArea>
          <Slide>
            <Para />
            <CursorLayer width="120" height="100" viewBox="0 0 120 100">
              <circle cx="67" cy="39" r="18" fill="#7fc47c" />
              <g fill="#8a8a3a" stroke="#ffff99" strokeWidth="1">
                <path d="M67 26l5 6h-3v6h-4v-6h-3z" />
                <path d="M54 39l6-5v3h6v4h-6v3z" />
                <path d="M80 39l-6-5v3h-6v4h6v3z" />
                <path d="M67 52l-5-6h3v-6h4v6h3z" />
              </g>
              <path d="M72 55l6 12 4-2-5-11z" fill="#fff" stroke="#000" />
              <path d="M67.500 40v23l6-7 10-1z" fill="#ffff99" stroke="#000" strokeWidth="1.200" />
            </CursorLayer>
          </Slide>
        </SlideArea>

        <RightRail>
          <RightScroll>
            <ScrollBtn $h={24}><Arrow $up /></ScrollBtn>
            <ScrollThumb $h={25} $mt={132} />
            <Spacer />
            <ScrollBtn $h={23}><Arrow /></ScrollBtn>
          </RightScroll>
          <PageJump>
            <Stack><Arrow $up /><Arrow $up /></Stack>
            <Stack><Arrow /><Arrow /></Stack>
          </PageJump>
        </RightRail>
        <EdgeStrip />
      </Workspace>
    </Page>
  );
}
